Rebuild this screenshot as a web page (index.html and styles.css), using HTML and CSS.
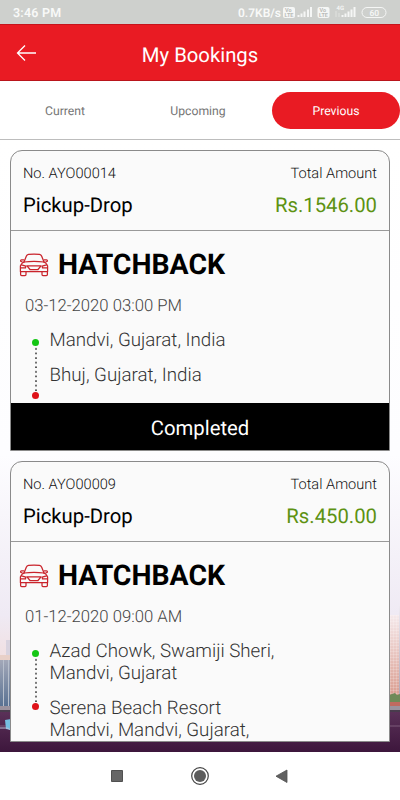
FILE: index.html
```
<!DOCTYPE html>
<html lang="en">
<head>
<meta charset="utf-8">
<title>My Bookings</title>
<link rel="stylesheet" href="styles.css">
</head>
<body>
<svg width="0" height="0" class="defs">
  <symbol id="car" viewBox="0 0 30 24">
    <g fill="none" stroke="#c9232b" stroke-width="1.25" stroke-linejoin="round" stroke-linecap="round">
      <path d="M5 9 7.3 3.2Q7.9 1.6 9.5 1.4 15 .7 20.5 1.4 22.1 1.6 22.7 3.2L25 9"/>
      <path d="M5 9Q15 7.8 25 9"/>
      <path d="M4.7 6.8H2.6Q1.3 7 1.7 8.2L3.6 9.2M25.300 6.8H27.400Q28.700 7 28.300 8.200L26.400 9.200"/>
      <path d="M5 9Q2 10.500 1.400 13V18.500H28.600V13Q28 10.500 25 9"/>
      <path d="M1.600 18.500V21.500Q1.600 22.500 2.700 22.500H6Q7 22.500 7 21.500V18.500M23 18.500V21.500Q23 22.500 24 22.500H27.300Q28.400 22.500 28.400 21.500V18.500"/>
      <path d="M8 12.800H22L19 16.500H11ZM2.500 11.800 6.800 13.200 6.500 14.800H2M27.500 11.800 23.200 13.200 23.500 14.800H28"/>
    </g>
  </symbol>
</svg>
<div class="phone">
  <div class="status">
    <span class="time">3:46 PM</span>
    <span class="speed">0.7KB/s</span>
    <svg class="signals" width="118" height="24" viewBox="0 0 118 24" fill="#f5f6f5">
      <rect x="1" y="7" width="12" height="11" rx="2"/>
      <rect x="35.500" y="7" width="12" height="11" rx="2"/>
      <g fill="#b9bbb8" class="volte"><text x="3" y="12.300">Vo</text><text x="2.600" y="17.300">LTE</text><text x="37.500" y="12.300">Vo</text><text x="37.100" y="17.300">LTE</text></g>
      <path d="M15.500 15h2v2h-2zM18.500 13.500h2v3.500h-2zM21.500 11.500h2v5.500h-2zM25 9.500h2v7.500h-2zM28 7h2v10h-2z"/>
      <path d="M59.500 15h2v2h-2zM62.500 13.500h2v3.500h-2zM65.500 11.500h2v5.500h-2zM68.500 9.500h2v7.500h-2zM71.500 7h2v10h-2z"/>
      <path opacity=".5" d="M53.500 11h1v6h-1zM56.500 13h1v4h-1z"/>
      <text class="g4" x="54.500" y="10">4G</text>
      <rect x="80" y="7.500" width="24" height="10" rx="5" fill="none" stroke="#f5f6f5"/>
      <text class="pct" x="87.500" y="15.500">60</text>
    </svg>
  </div>
  <header class="appbar">
    <svg class="back" width="22" height="18" viewBox="0 0 22 18"><path d="M20 9H1.500M9 1.500 1.500 9 9 16.500" fill="none" stroke="#fff" stroke-width="1.300"/></svg>
    <h1>My Bookings</h1>
  </header>
  <nav class="tabs">
    <span class="tab current">Current</span><span class="tab upcoming">Upcoming</span><span class="tab active">Previous</span>
  </nav>
  <main class="list">
    <svg class="city" width="400" height="612" viewBox="0 140 400 612">
      <defs>
        <linearGradient id="sky" x1="0" y1="0" x2="0" y2="1"><stop offset="0" stop-color="#fff"/><stop offset=".55" stop-color="#fdfdff"/><stop offset=".83" stop-color="#efeaf4"/><stop offset="1" stop-color="#f3d3cb"/></linearGradient>
        <linearGradient id="brick" x1="0" y1="0" x2="0" y2="1"><stop offset="0" stop-color="#f5e9eb"/><stop offset="1" stop-color="#d99a8c"/></linearGradient>
        <linearGradient id="glass" x1="0" y1="0" x2="0" y2="1"><stop offset="0" stop-color="#a3a8b8"/><stop offset="1" stop-color="#566f91"/></linearGradient>
        <linearGradient id="side" x1="0" y1="0" x2="0" y2="1"><stop offset="0" stop-color="#eeeaf2"/><stop offset="1" stop-color="#a9a4b4"/></linearGradient>
        <linearGradient id="road" x1="0" y1="0" x2="0" y2="1"><stop offset="0" stop-color="#5a3158"/><stop offset="1" stop-color="#3d163c"/></linearGradient>
        <pattern id="windows" width="3" height="3" patternUnits="userSpaceOnUse"><path d="M0 0H3M0 0V3" stroke="#fff" stroke-opacity=".35"/></pattern>
      </defs>
      <rect y="140" width="400" height="572" fill="url(#sky)"/>
      <path d="M6 640h5v18H6z" fill="#d9d3df"/>
      <rect y="655" width="11" height="5" fill="#e8d0c8"/>
      <rect y="660" width="11" height="48" fill="url(#glass)"/>
      <path d="M3.500 660v48M8.500 660v48" stroke="#b7bfcc"/>
      <rect x="389" y="615" width="10" height="85" fill="url(#brick)"/>
      <rect x="389" y="615" width="10" height="85" fill="url(#windows)"/>
      <rect x="399" y="606" width="1" height="94" fill="url(#side)"/>
      <path d="M389 695l3-1 3-1 2 2 3-1v8h-11z" fill="#6f8a58"/>
      <rect x="389" y="702" width="11" height="4" fill="#c06a60"/>
      <rect y="706" width="400" height="6" fill="#9b929e"/>
      <rect y="710" width="400" height="2" fill="#493c4d"/>
      <rect y="712" width="400" height="40" fill="url(#road)"/>
      <path d="M0 726H400" stroke="#7d5a7b"/>
      <path d="M5 720l6-1v11l-5-1z" fill="#75bfe0"/><path d="M0 728h7l4 2" stroke="#b9c0d8" fill="none"/>
    </svg>
    <article class="card">
      <div class="head">
        <div class="row small"><span>No. AYO00014</span><span class="tot">Total Amount</span></div>
        <div class="row big"><span>Pickup-Drop</span><span class="price">Rs.1546.00</span></div>
      </div>
      <div class="body">
        <div class="vehicle"><svg width="30" height="24"><use href="#car"/></svg><h2>HATCHBACK</h2></div>
        <div class="date">03-12-2020 03:00 PM</div>
        <div class="route">
          <div class="track"><i class="dot from"></i><i class="line"></i><i class="dot to"></i></div>
          <div class="stops"><p>Mandvi, Gujarat, India</p><p>Bhuj, Gujarat, India</p></div>
        </div>
      </div>
      <div class="state">Completed</div>
    </article>
    <article class="card last">
      <div class="head">
        <div class="row small"><span>No. AYO00009</span><span class="tot">Total Amount</span></div>
        <div class="row big"><span>Pickup-Drop</span><span class="price">Rs.450.00</span></div>
      </div>
      <div class="body">
        <div class="vehicle"><svg width="30" height="24"><use href="#car"/></svg><h2>HATCHBACK</h2></div>
        <div class="date">01-12-2020 09:00 AM</div>
        <div class="route">
          <div class="track"><i class="dot from"></i><i class="line"></i><i class="dot to"></i></div>
          <div class="stops"><p>Azad Chowk, Swamiji Sheri,<br>Mandvi, Gujarat</p><p>Serena Beach Resort<br>Mandvi, Mandvi, Gujarat,</p></div>
        </div>
      </div>
    </article>
  </main>
  <footer class="navbar">
    <svg width="400" height="48" viewBox="0 0 400 48"><path d="M111.500 18.500h11v11h-11z" fill="#666" stroke="#505050"/><circle cx="200" cy="24" r="8.300" fill="none" stroke="#444" stroke-width="1.200"/><circle cx="200" cy="24" r="6" fill="#5c5c5c"/><path d="M287 18v12.500L276 24.200Z" fill="#606060" stroke="#505050" stroke-width=".8"/></svg>
  </footer>
</div>
</body>
</html>
```
FILE: styles.css
```
* { box-sizing: border-box; margin: 0; padding: 0; }
body { font-family: Roboto, sans-serif; background: #fff; text-rendering: geometricPrecision; }
.defs { position: absolute; }
svg { display: block; flex: none; }
.phone { width: 400px; height: 800px; display: flex; flex-direction: column; overflow: hidden; }
.status { height: 24px; background: #ced0cd; color: #f8f9f8; display: flex; align-items: center; padding: 2px 12px 0 13px; font-size: 12.500px; font-weight: 600; }
.time { letter-spacing: .2px; }
.speed { margin-left: auto; font-size: 12px; font-weight: 600; }
.signals { margin: -2px -12px 0 1px; }
.volte { font-size: 5.500px; font-weight: 700; }
.g4 { font-size: 6px; }
.pct { font-size: 8.500px; }
.appbar { height: 57px; flex: none; background: #e91b23; color: #fff; position: relative; display: flex; align-items: center; justify-content: center; border-top: 1px solid #c5141c; border-bottom: 1px solid #b9151b; }
.back { position: absolute; left: 15.500px; top: 19px; }
h1 { font-size: 20.300px; font-weight: 400; padding-top: 4px; }
.tabs { height: 59px; flex: none; display: flex; padding: 11px 0 10px; border-bottom: 1px solid #bdbdbd; background: #fff; }
.tab { height: 37px; display: flex; align-items: center; justify-content: center; font-size: 12.200px; color: #757575; }
.current { width: 130px; }
.upcoming { width: 136px; margin-right: 6px; }
.active { width: 128px; background: #e91b23; color: #fff; border-radius: 19px; }
.list { height: 612px; flex: none; position: relative; padding: 10px 10px; overflow: hidden; }
.city { position: absolute; left: 0; top: 0; }
.card { position: relative; border: 1px solid #8a8a8a; border-radius: 12px 12px 0 0; background: #fafafa; margin-bottom: 10px; }
.head { height: 80px; padding: 13px 12px 0 12px; border-bottom: 1px solid #999; }
.row { display: flex; justify-content: space-between; white-space: nowrap; }
.small { font-size: 14.600px; line-height: 18px; color: #111; font-weight: 300; }
.big { font-size: 20.300px; line-height: 24px; margin-top: 11px; color: #000; }
.price { color: #5d9212; }
.body { height: 172px; padding: 17px 8px 0; }
.vehicle { display: flex; align-items: center; height: 34px; gap: 9px; }
h2 { font-size: 28.400px; font-weight: 700; line-height: 34px; color: #000; }
.date { font-size: 16.700px; line-height: 20px; margin: 15px 0 0 6px; color: #444; font-weight: 300; }
.route { display: flex; margin-top: 11px; }
.track { width: 7px; margin: 11px 0 0 13px; display: flex; flex-direction: column; align-items: center; }
.dot { width: 7px; height: 7px; border-radius: 50%; flex: none; }
.from { background: #14c614; }
.to { background: #df1219; }
.line { width: 2px; height: 46px; background: radial-gradient(circle at 1px 3px, #555 0 .7px, transparent 1.200px) 0 0 / 2px 4.600px; }
.stops { margin: 1px 0 0 10.500px; font-size: 18.750px; line-height: 22px; color: #333; font-weight: 300; white-space: nowrap; }
.stops p + p { margin-top: 13px; }
.state { height: 47px; background: #000; color: #fff; display: flex; align-items: center; justify-content: center; font-size: 20.300px; padding-top: 3px; }
.last { margin: 0; height: 281px; }
.last .body { height: 199px; }
.navbar { height: 48px; flex: none; background: #fff; }
```
